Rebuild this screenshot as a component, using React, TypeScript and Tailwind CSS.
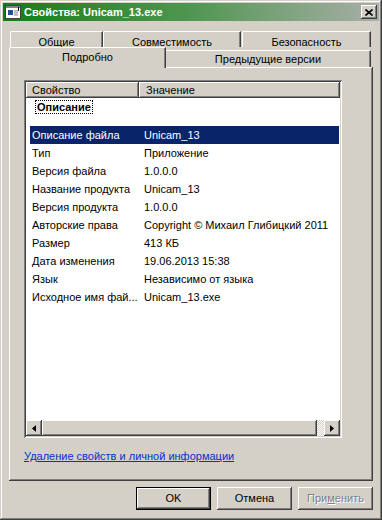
const rows: [string, string][] = [
  ["Тип", "Приложение"],
  ["Версия файла", "1.0.0.0"],
  ["Название продукта", "Unicam_13"],
  ["Версия продукта", "1.0.0.0"],
  ["Авторские права", "Copyright © Михаил Глибицкий 2011"],
  ["Размер", "413 КБ"],
  ["Дата изменения", "19.06.2013 15:38"],
  ["Язык", "Независимо от языка"],
  ["Исходное имя фай...", "Unicam_13.exe"],
];

const raised =
  "bg-[#d4d0c8] shadow-[inset_-1px_-1px_0_#404040,inset_1px_1px_0_#ffffff,inset_-2px_-2px_0_#808080]";

function Arrow({ dir }: { dir: "left" | "right" }) {
  return (
    <svg width="4" height="7" viewBox="0 0 4 7">
      {dir === "left" ? <path d="M4 0 L0 3.5 L4 7 Z" fill="#000" /> : <path d="M0 0 L4 3.5 L0 7 Z" fill="#000" />}
    </svg>
  );
}

export default function App() {
  return (
    <div className="w-[382px] h-[520px] bg-[#d4d0c8] p-[3px] flex flex-col text-[11px] text-black font-['Liberation_Sans',Arial,sans-serif] shadow-[inset_-1px_-1px_0_#404040,inset_1px_1px_0_#d4d0c8,inset_-2px_-2px_0_#808080,inset_2px_2px_0_#ffffff]">
      {/* title bar */}
      <div className="h-[18px] flex items-center bg-gradient-to-r from-[#0f7d12] via-[#4f9650] to-[#a7aea7] pl-[2px] pr-[2px]">
        <svg width="16" height="14" viewBox="0 0 16 14" className="shrink-0">
          <rect x="0.5" y="0.5" width="15" height="13" fill="#fff" stroke="#404040" />
          <rect x="1" y="1" width="14" height="2" fill="#808080" />
          <rect x="3" y="5" width="5" height="5" fill="#2050a0" />
          <rect x="9" y="5" width="4" height="6" fill="#c0c0c0" />
          <rect x="13" y="2" width="1" height="4" fill="#000" />
        </svg>
        <span className="ml-[3px] text-white font-bold leading-[14px]">Свойства: Unicam_13.exe</span>
        <div className={`ml-auto w-[16px] h-[14px] flex items-center justify-center ${raised}`}>
          <svg width="8" height="7" viewBox="0 0 8 7">
            <path d="M0.5 0.5 L7.5 6.5 M7.5 0.5 L0.5 6.5" stroke="#000" strokeWidth="1.6" />
          </svg>
        </div>
      </div>

      <div className="flex flex-col pl-[6px] pr-[6px] pt-[10px]">
        {/* tab row 1 */}
        <div className="flex h-[16px] pl-[1px]">
          {[
            ["Общие", "w-[93px]"],
            ["Совместимость", "w-[138px]"],
            ["Безопасность", "w-[129px] ml-[1px]"],
          ].map(([t, w]) => (
            <div key={t} className={`${w} h-[16px] text-center pt-[4px] leading-[13px] border-t border-l border-white rounded-tl-[2px] border-r border-r-[#404040] shadow-[inset_-1px_0_0_#808080]`}>
              {t}
            </div>
          ))}
        </div>
        {/* tab row 2 */}
        <div className="flex items-end h-[20px]">
          <div className="relative z-10 w-[157px] h-[21px] -mb-[1px] bg-[#d4d0c8] text-center pt-[3px] leading-[13px] border-t border-l border-white rounded-tl-[2px] border-r border-r-[#404040] shadow-[inset_-1px_0_0_#808080]">
            Подробно
          </div>
          <div className="w-[205px] h-[17px] text-center pt-[2px] leading-[13px] border-t border-white border-r border-r-[#404040] shadow-[inset_-1px_0_0_#808080]">
            Предыдущие версии
          </div>
        </div>

        {/* panel */}
        <div className="h-[414px] flex flex-col pl-[15px] pr-[31px] pt-[13px] shadow-[inset_-1px_-1px_0_#404040,inset_1px_1px_0_#ffffff,inset_-2px_-2px_0_#808080]">
          <div className="h-[358px] flex flex-col p-[2px] bg-white shadow-[inset_1px_1px_0_#808080,inset_-1px_-1px_0_#ffffff,inset_2px_2px_0_#404040,inset_-2px_-2px_0_#d4d0c8]">
            {/* header */}
            <div className="flex h-[16px] shrink-0">
              <div className={`w-[113px] pl-[6px] leading-[16px] ${raised}`}>Свойство</div>
              <div className={`flex-1 pl-[7px] leading-[16px] ${raised}`}>Значение</div>
            </div>
            {/* body */}
            <div className="flex-1 flex flex-col">
              <div className="h-[17px] pl-[9px] pt-[1px]">
                <span className="inline-block font-bold leading-[14px] px-[2px] outline outline-1 outline-dotted outline-black -outline-offset-1">Описание</span>
              </div>
              <div className="mt-[11px] ml-[4px] mr-[1px] h-[18px] flex items-center bg-[#0a246a] text-white">
                <span className="w-[114px] pl-[2px]">Описание файла</span>
                <span>Unicam_13</span>
              </div>
              {rows.map(([k, v]) => (
                <div key={k} className="ml-[4px] mr-[1px] h-[18px] flex items-center">
                  <span className="w-[114px] pl-[2px] truncate">{k}</span>
                  <span>{v}</span>
                </div>
              ))}
            </div>
            {/* scrollbar */}
            <div className="h-[16px] flex shrink-0">
              <div className={`w-[16px] flex items-center justify-center ${raised}`}>
                <Arrow dir="left" />
              </div>
              <div className={`flex-1 ${raised}`} />
              <div className="w-[7px] bg-[repeating-conic-gradient(#ffffff_0_25%,#d4d0c8_0_50%)] bg-[length:2px_2px]" />
              <div className={`w-[16px] flex items-center justify-center ${raised}`}>
                <Arrow dir="right" />
              </div>
            </div>
          </div>
          <a href="#" className="mt-[12px] leading-[13px] text-[#0033cc] underline self-start">
            Удаление свойств и личной информации
          </a>
        </div>

        {/* buttons */}
        <div className="flex justify-end gap-[6px] mt-[6px]">
          <button className={`w-[75px] h-[23px] border border-black ${raised}`}>OK</button>
          <button className={`w-[75px] h-[23px] ${raised}`}>Отмена</button>
          <button className={`w-[75px] h-[23px] text-[#808080] [text-shadow:1px_1px_0_#ffffff] ${raised}`}>
            При<span className="underline">м</span>енить
          </button>
        </div>
      </div>
    </div>
  );
}
